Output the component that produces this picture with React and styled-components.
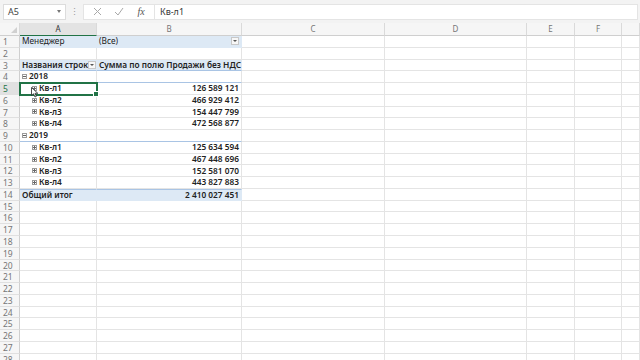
import React from 'react';
import styled, { createGlobalStyle } from 'styled-components';

const GlobalStyle = createGlobalStyle`
    html, body {
        margin: 0;
        padding: 0;
        background: #ffffff;
        overflow: hidden;
    }
    body {
        font-family: "Noto Sans", "Open Sans", Arial, sans-serif;
    }
`;

const Page = styled.div`
    width: 640px;
    height: 360px;
    overflow: hidden;
    display: flex;
    flex-direction: column;
    background: #fff;
`;

const FormulaBar = styled.div`
    height: 23px;
    flex: none;
    display: flex;
    align-items: center;
    padding: 0 2px 0 3px;
    background: #f3f3f3;
    box-sizing: border-box;
`;

const NameBox = styled.div`
    width: 63px;
    height: 16px;
    box-sizing: border-box;
    background: #fff;
    border: 1px solid #dcdcdc;
    display: flex;
    align-items: center;
    justify-content: space-between;
    padding: 0 4px;
    font-size: 9px;
    color: #444;
`;

const SmallArrow = styled.span`
    width: 0;
    height: 0;
    border-left: 2px solid transparent;
    border-right: 2px solid transparent;
    border-top: 3px solid #777;
`;

const Dots = styled.span`
    width: 17px;
    text-align: center;
    font-size: 9px;
    color: #999;
`;

const FormulaBox = styled.div`
    flex: 1;
    height: 16px;
    display: flex;
    align-items: center;
    background: #fff;
    border: 1px solid #e4e4e4;
    box-sizing: border-box;
`;

const IconSlot = styled.span`
    width: 22px;
    display: flex;
    justify-content: center;
    align-items: center;
    color: #a8a8a8;
`;

const Fx = styled.span`
    width: 22px;
    text-align: center;
    font-family: "Liberation Serif", serif;
    font-style: italic;
    font-size: 10px;
    color: #555;
`;

const FormulaInput = styled.div`
    flex: 1;
    height: 100%;
    border-left: 1px solid #e4e4e4;
    margin-left: 2px;
    padding-left: 5px;
    font-size: 9px;
    line-height: 14px;
    color: #333;
`;

const Sheet = styled.div`
    position: relative;
    flex: 1;
    display: grid;
    grid-template-columns: 20px 77px 145px 143px 142px 48px 47px 1fr;
    grid-template-rows: 13px;
    grid-auto-rows: 11.77px;
    overflow: hidden;
`;

const ColHead = styled.div`
    background: ${(p) => (p.$active ? '#e3e3e3' : '#f6f6f6')};
    border-right: 1px solid #dadada;
    border-bottom: ${(p) => (p.$active ? '1px solid #217346' : '1px solid #cfcfcf')};
    color: ${(p) => (p.$active ? '#333' : '#777')};
    font-size: 8px;
    line-height: 12px;
    text-align: center;
    box-sizing: border-box;
    position: relative;
`;

const Corner = styled(ColHead)`
    &::after {
        content: '';
        position: absolute;
        right: 2px;
        bottom: 2px;
        border-left: 6px solid transparent;
        border-bottom: 6px solid #d0d0d0;
    }
`;

const RowHead = styled.div`
    background: ${(p) => (p.$active ? '#e1e1e1' : '#f6f6f6')};
    border-right: ${(p) => (p.$active ? '1px solid #217346' : '1px solid #cfcfcf')};
    border-bottom: 1px solid #e0e0e0;
    color: ${(p) => (p.$active ? '#217346' : '#777')};
    font-size: 8.5px;
    line-height: 11px;
    padding-left: 3px;
    box-sizing: border-box;
`;

const Cell = styled.div`
    position: relative;
    box-sizing: border-box;
    background: ${(p) => (p.$fill ? '#dde9f5' : '#fff')};
    border-right: 1px solid ${(p) => (p.$fill ? '#dde9f5' : '#e4e4e4')};
    border-bottom: 1px solid ${(p) => (p.$line ? '#a9c4e4' : p.$fill ? '#dde9f5' : '#e4e4e4')};
    border-top: ${(p) => (p.$topLine ? '1px solid #a9c4e4' : '0')};
    font-size: 8.3px;
    font-weight: ${(p) => (p.$bold ? 600 : 400)};
    color: #222;
    line-height: 10.5px;
    white-space: nowrap;
    display: flex;
    align-items: center;
    justify-content: ${(p) => (p.$right ? 'flex-end' : 'flex-start')};
    padding: 0 2px 0 ${(p) => p.$indent || 2}px;
    z-index: ${(p) => (p.$selected ? 2 : 0)};
    outline: ${(p) => (p.$selected ? '2px solid #217346' : 'none')};
    outline-offset: -1px;

    &::after {
        content: ${(p) => (p.$selected ? "''" : 'none')};
        position: absolute;
        right: -3px;
        bottom: -3px;
        width: 4px;
        height: 4px;
        background: #217346;
        border: 1px solid #fff;
    }
`;

const FilterBtn = styled.span`
    margin-left: auto;
    width: 8px;
    height: 8px;
    flex: none;
    box-sizing: border-box;
    border: 1px solid #c8c8c8;
    background: #f7f7f7;
    display: flex;
    align-items: center;
    justify-content: center;

    &::before {
        content: '';
        border-left: 2px solid transparent;
        border-right: 2px solid transparent;
        border-top: 2px solid #555;
    }
`;

const Toggle = styled.span`
    width: 5px;
    height: 5px;
    box-sizing: border-box;
    border: 1px solid #9a9a9a;
    margin-right: 2px;
    position: relative;
    flex: none;

    &::before {
        content: '';
        position: absolute;
        left: 0;
        right: 0;
        top: 1px;
        height: 1px;
        background: #666;
    }

    &::after {
        content: ${(p) => (p.$plus ? "''" : 'none')};
        position: absolute;
        top: 0;
        bottom: 0;
        left: 1px;
        width: 1px;
        background: #666;
    }
`;

const Cursor = styled.svg`
    position: absolute;
    left: 31px;
    top: 64px;
    z-index: 5;
`;

const cols = ['A', 'B', 'C', 'D', 'E', 'F', 'G'];

// строки сводной таблицы
const pivot = {
    1: { a: 'Менеджер', b: '(Все)', fill: true, filterB: true },
    3: { a: 'Названия строк', b: 'Сумма по полю Продажи без НДС', fill: true, bold: true, filterA: true, line: true },
    4: { a: '2018', bold: true, toggle: 'minus', line: true },
    5: { a: 'Кв-л1', b: '126 589 121', bold: true, toggle: 'plus', indent: 12 },
    6: { a: 'Кв-л2', b: '466 929 412', bold: true, toggle: 'plus', indent: 12 },
    7: { a: 'Кв-л3', b: '154 447 799', bold: true, toggle: 'plus', indent: 12 },
    8: { a: 'Кв-л4', b: '472 568 877', bold: true, toggle: 'plus', indent: 12 },
    9: { a: '2019', bold: true, toggle: 'minus', line: true },
    10: { a: 'Кв-л1', b: '125 634 594', bold: true, toggle: 'plus', indent: 12 },
    11: { a: 'Кв-л2', b: '467 448 696', bold: true, toggle: 'plus', indent: 12 },
    12: { a: 'Кв-л3', b: '152 581 070', bold: true, toggle: 'plus', indent: 12 },
    13: { a: 'Кв-л4', b: '443 827 883', bold: true, toggle: 'plus', indent: 12 },
    14: { a: 'Общий итог', b: '2 410 027 451', fill: true, bold: true, topLine: true },
};

const rows = Array.from({ length: 28 }, (_, i) => i + 1);

const App = () => {
    return (
        <Page>
            <GlobalStyle />
            <FormulaBar>
                <NameBox>
                    <span>A5</span>
                    <SmallArrow />
                </NameBox>
                <Dots>⋮</Dots>
                <FormulaBox>
                    <IconSlot style={{ marginLeft: 2 }}>
                        <svg width="9" height="9" viewBox="0 0 9 9">
                            <path d="M1 1 L8 8 M8 1 L1 8" stroke="#a8a8a8" strokeWidth="1" />
                        </svg>
                    </IconSlot>
                    <IconSlot>
                        <svg width="10" height="9" viewBox="0 0 10 9">
                            <path d="M1 5 L4 8 L9 1" stroke="#a8a8a8" strokeWidth="1" fill="none" />
                        </svg>
                    </IconSlot>
                    <Fx>fx</Fx>
                    <FormulaInput>Кв-л1</FormulaInput>
                </FormulaBox>
            </FormulaBar>
            <Sheet>
                <Corner />
                {cols.map((c) => (
                    <ColHead key={c} $active={c === 'A'}>{c === 'G' ? '' : c}</ColHead>
                ))}
                {rows.map((r) => {
                    const p = pivot[r] || {};
                    return (
                        <React.Fragment key={r}>
                            <RowHead $active={r === 5}>{r}</RowHead>
                            <Cell
                                $fill={p.fill}
                                $bold={p.bold}
                                $line={p.line}
                                $topLine={p.topLine}
                                $indent={p.indent}
                                $selected={r === 5}
                            >
                                {p.toggle && <Toggle $plus={p.toggle === 'plus'} />}
                                {p.a}
                                {p.filterA && <FilterBtn />}
                            </Cell>
                            <Cell
                                $fill={p.fill}
                                $bold={p.bold}
                                $line={p.line}
                                $topLine={p.topLine}
                                $right={!p.filterB && r !== 3}
                            >
                                {p.b}
                                {p.filterB && <FilterBtn />}
                            </Cell>
                            {cols.slice(2).map((c) => (
                                <Cell key={c} />
                            ))}
                        </React.Fragment>
                    );
                })}
                <Cursor width="8" height="11" viewBox="0 0 8 11">
                    <path d="M0.5 0.5 L0.5 8.5 L2.5 6.8 L4 10 L5.4 9.3 L4 6.3 L6.8 6.3 Z" fill="#fff" stroke="#222" strokeWidth="0.8" />
                </Cursor>
            </Sheet>
        </Page>
    );
};

export default App;
